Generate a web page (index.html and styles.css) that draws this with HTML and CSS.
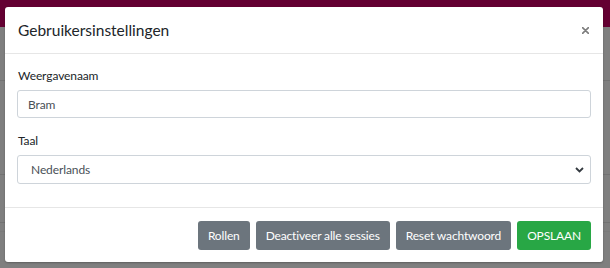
FILE: index.html
```html
<!DOCTYPE html>
<html lang="nl">
<head>
<meta charset="utf-8">
<title>Gebruikersinstellingen</title>
<link rel="stylesheet" href="styles.css">
</head>
<body>
<div class="page">
  <div class="topbar"></div>
  <div class="content">
    <div class="row r1"></div>
    <div class="row r2"></div>
    <div class="row r3"></div>
    <div class="row r4"></div>
  </div>
</div>
<div class="modal">
  <div class="modal-header">
    <h5 class="modal-title">Gebruikersinstellingen</h5>
    <button class="close" aria-label="Sluiten">
      <svg width="7" height="7" viewBox="0 0 7 7"><path d="M0.5 0.5L6.5 6.5M6.5 0.5L0.5 6.5" stroke="#7d7d7d" stroke-width="1.6" stroke-linecap="round"/></svg>
    </button>
  </div>
  <div class="modal-body">
    <div class="group">
      <label class="label">Weergavenaam</label>
      <input class="control" type="text" value="Bram">
    </div>
    <div class="group last">
      <label class="label">Taal</label>
      <div class="select-wrap">
        <select class="control select"><option>Nederlands</option></select>
        <svg class="chev" width="9" height="6" viewBox="0 0 9 6"><path d="M1 1L4.5 4.5L8 1" fill="none" stroke="#343a40" stroke-width="1.8"/></svg>
      </div>
    </div>
  </div>
  <div class="modal-footer">
    <button class="btn grey">Rollen</button>
    <button class="btn grey">Deactiveer alle sessies</button>
    <button class="btn grey">Reset wachtwoord</button>
    <button class="btn green">OPSLAAN</button>
  </div>
</div>
</body>
</html>
```
FILE: styles.css
```css
html, body {
  margin: 0;
  padding: 0;
}
body {
  width: 610px;
  height: 268px;
  overflow: hidden;
  background: #7f7f7f;
  font-family: Lato, "Noto Sans", sans-serif;
  color: #212529;
}
.page {
  display: flex;
  flex-direction: column;
}
.topbar {
  height: 27px;
  background: #640032;
}
.content {
  display: flex;
  flex-direction: column;
}
.row {
  border-bottom: 1px solid #727272;
}
.r1 { height: 53px; }
.r2 { height: 93px; }
.r3 { height: 47px; }
.r4 { height: 8px; border-bottom-color: #7a7a7a; }

.modal {
  position: absolute;
  left: 5px;
  top: 7px;
  width: 598px;
  height: 255px;
  background: #fff;
  border-radius: 3px;
  box-shadow: 0 1px 2px rgba(0,0,0,0.25);
  display: flex;
  flex-direction: column;
  box-sizing: border-box;
}
.modal-header {
  height: 47px;
  box-sizing: border-box;
  border-bottom: 1px solid #e6e6e6;
  padding: 0 12px 0 13px;
  display: flex;
  align-items: center;
  justify-content: space-between;
}
.modal-title {
  margin: 0;
  font-size: 15.5px;
  font-weight: 400;
  color: #212529;
  line-height: 22px;
}
.close {
  border: 0;
  background: none;
  padding: 0;
  margin-right: 2px;
  width: 7px;
  height: 7px;
  display: flex;
}
.modal-body {
  padding: 12px 12px 12px 12px;
  height: 154px;
  box-sizing: border-box;
  border-bottom: 1px solid #e6e6e6;
}
.group {
  display: flex;
  flex-direction: column;
  margin-bottom: 13px;
}
.group.last { margin-bottom: 0; }
.label {
  font-size: 12px;
  letter-spacing: -0.1px;
  line-height: 20px;
  margin-bottom: 4px;
  padding-left: 1px;
}
.control {
  height: 28px;
  box-sizing: border-box;
  border: 1px solid #ced4da;
  border-radius: 3px;
  padding: 0 10px;
  font-family: inherit;
  font-size: 12px;
  letter-spacing: -0.1px;
  color: #495057;
  background: #fff;
  width: 100%;
  outline: none;
}
.select-wrap {
  position: relative;
}
.select {
  height: 29px;
  -webkit-appearance: none;
  appearance: none;
  padding-left: 13px;
}
.chev {
  position: absolute;
  right: 7px;
  top: 12px;
}
.modal-footer {
  flex: 1;
  display: flex;
  justify-content: flex-end;
  align-items: center;
  gap: 6px;
  padding: 0 12px;
}
.btn {
  height: 29px;
  border: 0;
  border-radius: 3px;
  padding: 0 10px;
  font-family: inherit;
  font-size: 12px;
  letter-spacing: -0.15px;
  color: #fff;
  line-height: 29px;
}
.grey { background: #6c757d; }
.green { background: #28a745; }
```
